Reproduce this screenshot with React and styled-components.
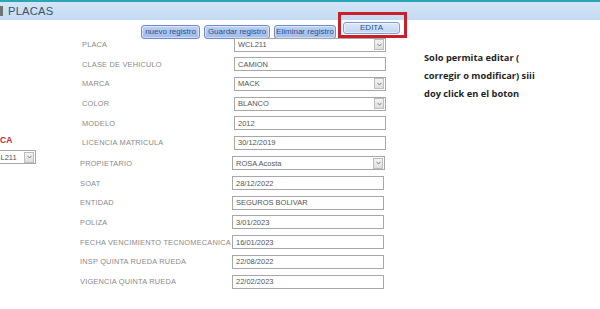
import React from 'react';
import styled, { createGlobalStyle } from 'styled-components';

const GlobalStyle = createGlobalStyle`
  body {
    margin: 0;
    background: #ffffff;
    overflow: hidden;
  }
  *, *::before, *::after {
    box-sizing: border-box;
  }
`;

const Page = styled.div`
  width: 600px;
  height: 309px;
  overflow: hidden;
  font-family: 'Liberation Sans', Arial, sans-serif;
`;

const Header = styled.div`
  height: 35px;
`;

const TitleBar = styled.div`
  height: 20px;
  border-top: 2px solid #2fa3b6;
  background: linear-gradient(#d3e6f7, #c3daf1);
  display: flex;
  align-items: center;
`;

const TitleIcon = styled.span`
  width: 3px;
  height: 10px;
  background: #6f7479;
`;

const Title = styled.span`
  margin-left: 5px;
  font-size: 11.2px;
  letter-spacing: 0.2px;
  color: #3e5264;
`;

const Toolbar = styled.div`
  height: 14px;
  padding-left: 141px;
  margin-top: 5px;
  display: flex;
  align-items: flex-start;
  gap: 4px;
`;

const ToolButton = styled.button`
  height: ${(p) => p.$h || 14}px;
  width: ${(p) => p.$w}px;
  padding: 0;
  border: 1px solid ${(p) => (p.$light ? '#7f9cd2' : '#6e8ccb')};
  border-radius: 3px;
  background: ${(p) =>
    p.$light
      ? 'linear-gradient(#dbe8f8, #c2d6f2)'
      : 'linear-gradient(#bcd1f3, #9fbbea)'};
  box-shadow: inset 0 0 0 1px rgba(255, 255, 255, 0.5);
  font-family: 'Liberation Sans', Arial, sans-serif;
  font-size: 8px;
  line-height: 1;
  color: #2f4f86;
  flex: none;
`;

const EditFrame = styled.div`
  position: relative;
  z-index: 1;
  margin: -13px 0 0 -2px;
  width: 69px;
  height: 26px;
  padding: 7px 0 0 2px;
  border: 3px solid #c91f2a;
  display: flex;
  align-items: flex-start;
  flex: none;
`;

const Body = styled.div`
  display: flex;
`;

const LeftPane = styled.div`
  width: 40px;
  flex: none;
  padding-top: 100px;
  display: flex;
  flex-direction: column;
  gap: 5px;
`;

const SideTitle = styled.div`
  margin-left: -17px;
  font-size: 8.5px;
  line-height: 10px;
  font-weight: bold;
  color: #c0282d;
`;

const FormPane = styled.div`
  width: 384px;
  flex: none;
`;

const Group = styled.div`
  margin-left: ${(p) => p.$offset}px;
  padding-top: ${(p) => p.$top}px;
`;

const Row = styled.div`
  height: ${(p) => p.$h}px;
  display: grid;
  grid-template-columns: 152px 153px;
  align-items: center;
`;

const Label = styled.span`
  font-size: 7.4px;
  letter-spacing: 0.2px;
  color: #8a8a8a;
  white-space: nowrap;
`;

const Field = styled.div`
  height: 14px;
  width: ${(p) => p.$w || 152}px;
  border: 1px solid #a7a7a7;
  background: #ffffff;
  display: flex;
  align-items: center;
  padding-left: 3px;
  font-size: 7.5px;
  color: #555555;
  margin-left: ${(p) => p.$shift || 0}px;
`;

const FieldText = styled.span`
  flex: 1;
  white-space: nowrap;
`;

const DropButton = styled.span`
  width: 10px;
  height: 11px;
  margin-right: 1px;
  border: 1px solid #bdbdbd;
  background: linear-gradient(#f4f4f4, #dedede);
  display: flex;
  align-items: center;
  justify-content: center;
  flex: none;
`;

const NotePane = styled.div`
  padding-top: 14px;
  font-family: 'Open Sans', sans-serif;
  font-weight: bold;
  font-size: 9.3px;
  line-height: 18px;
  color: #1f1f1f;
`;

const Chevron = () => (
  <svg width="5" height="4" viewBox="0 0 5 4">
    <path d="M0.5 0.8 L2.5 3 L4.5 0.8" fill="none" stroke="#777" strokeWidth="0.9" />
  </svg>
);

const Select = ({ value, w, shift }) => (
  <Field $w={w} $shift={shift}>
    <FieldText>{value}</FieldText>
    <DropButton>
      <Chevron />
    </DropButton>
  </Field>
);

const vehicle = [
  ['PLACA', 'WCL211', true],
  ['CLASE DE VEHICULO', 'CAMION'],
  ['MARCA', 'MACK', true],
  ['COLOR', 'BLANCO', true],
  ['MODELO', '2012'],
  ['LICENCIA MATRICULA', '30/12/2019'],
];

const owner = [
  ['PROPIETARIO', 'ROSA Acosta', true],
  ['SOAT', '28/12/2022'],
  ['ENTIDAD', 'SEGUROS BOLIVAR'],
  ['POLIZA', '3/01/2023'],
  ['FECHA VENCIMIENTO TECNOMECANICA', '16/01/2023'],
  ['INSP QUINTA RUEDA RUEDA', '22/08/2022'],
  ['VIGENCIA QUINTA RUEDA', '22/02/2023'],
];

const renderRow = ([label, value, isSelect], h, selectW) => (
  <Row key={label} $h={h}>
    <Label>{label}</Label>
    {isSelect ? <Select value={value} w={selectW} /> : <Field>{value}</Field>}
  </Row>
);

export default function App() {
  return (
    <Page>
      <GlobalStyle />
      <Header>
        <TitleBar>
          <TitleIcon />
          <Title>PLACAS</Title>
        </TitleBar>
        <Toolbar>
          <ToolButton $w={59}>nuevo registro</ToolButton>
          <ToolButton $w={66}>Guardar registro</ToolButton>
          <ToolButton $w={62}>Eliminar registro</ToolButton>
          <EditFrame>
            <ToolButton $w={57} $h={12} $light>
              EDITA
            </ToolButton>
          </EditFrame>
        </Toolbar>
      </Header>
      <Body>
        <LeftPane>
          <SideTitle>PLACA</SideTitle>
          <Select value="WCL211" w={52} shift={-16} />
        </LeftPane>
        <FormPane>
          <Group $offset={42} $top={0}>
            {vehicle.map((r) => renderRow(r, 19.6, 152))}
          </Group>
          <Group $offset={40} $top={1}>
            {owner.map((r) => renderRow(r, 19.7, 153))}
          </Group>
        </FormPane>
        <NotePane>
          Solo permita editar (
          <br />
          corregir o modificar) siii
          <br />
          doy click en el boton
        </NotePane>
      </Body>
    </Page>
  );
}
